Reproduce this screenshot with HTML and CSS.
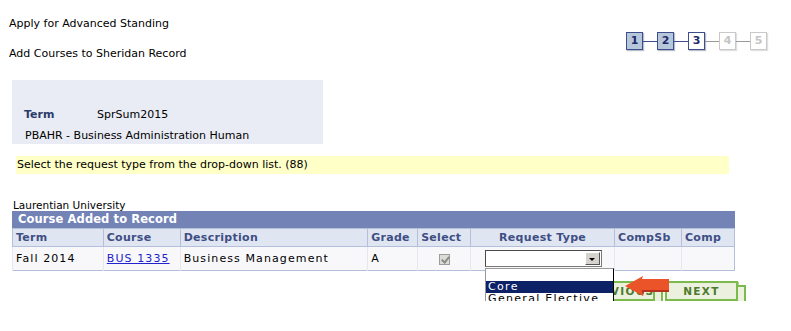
FILE: index.html
```html
<!DOCTYPE html>
<html lang="en">
<head>
<meta charset="UTF-8" />
<title>Apply for Advanced Standing</title>
<link rel="stylesheet" href="styles.css">
</head>
<body>
  <div class="page-head">
    <div class="titles">
      <div class="title">Apply for Advanced Standing</div>
      <div class="subtitle">Add Courses to Sheridan Record</div>
    </div>
    <div class="steps" aria-label="Step 3 of 5">
      <span class="step done">1</span><span class="link"></span>
      <span class="step done">2</span><span class="link"></span>
      <span class="step current">3</span><span class="link off"></span>
      <span class="step off">4</span><span class="link off"></span>
      <span class="step off">5</span>
    </div>
  </div>

  <div class="term-box">
    <div class="term-row">
      <span class="term-label">Term</span>
      <span class="term-value">SprSum2015</span>
    </div>
    <div class="program">PBAHR - Business Administration Human</div>
  </div>

  <div class="message">Select the request type from the drop-down list. (88)</div>

  <div class="institution">Laurentian University</div>
  <table class="grid">
    <caption>Course Added to Record</caption>
    <thead>
      <tr>
        <th class="c-term">Term</th>
        <th class="c-course">Course</th>
        <th class="c-desc">Description</th>
        <th class="c-grade">Grade</th>
        <th class="c-select">Select</th>
        <th class="c-type center">Request Type</th>
        <th class="c-compsb">CompSb</th>
        <th class="c-comp">Comp</th>
      </tr>
    </thead>
    <tbody>
      <tr>
        <td>Fall 2014</td>
        <td><a href="#">BUS 1335</a></td>
        <td>Business Management</td>
        <td>A</td>
        <td class="center"><span class="check"></span></td>
        <td class="type-cell">
          <div class="combo">
            <span class="combo-text"></span>
            <span class="combo-btn"></span>
          </div>
          <ul class="options">
            <li>&nbsp;</li>
            <li class="picked">Core</li>
            <li>General Elective</li>
          </ul>
        </td>
        <td></td>
        <td></td>
      </tr>
    </tbody>
  </table>

  <div class="actions">
    <button class="btn prev">PREVIOUS</button>
    <button class="btn next">NEXT</button>
    <svg class="pointer" viewBox="0 0 45 21" aria-hidden="true">
      <path d="M0 10 L18 0 L17 3 L44 3 L44 14 L17 14 L18 20 Z" fill="#ea5428" />
      <path d="M17 14 L44 14 L44 16 L19 16 L18 20 Z" fill="#b9331c" />
    </svg>
  </div>
</body>
</html>
```

FILE: styles.css
```css
* {
  box-sizing: border-box;
}

body {
  margin: 0;
  width: 791px;
  font-family: "DejaVu Sans", Verdana, sans-serif;
  font-size: 11px;
  color: #000;
  background: #fff;
}

/* Page title and step tracker */
.page-head {
  display: flex;
  justify-content: space-between;
  padding: 17px 24px 0 9px;
}

.title {
  height: 30px;
}

.subtitle {
  height: 33px;
}

.steps {
  display: flex;
  align-items: center;
  height: 18px;
  margin-top: 15px;
}

.step {
  width: 17px;
  height: 18px;
  border: 1px solid #3d4d8e;
  background: #b7c7db;
  color: #1c2a6a;
  font-weight: bold;
  font-size: 11px;
  line-height: 16px;
  text-align: center;
  box-shadow: 1px 1px 1px #b9bdc6;
}

.step.current {
  background: #fff;
}

.step.off {
  border-color: #c9c9c9;
  background: #fff;
  color: #c4c4c4;
  box-shadow: 1px 1px 1px #e0e0e0;
}

.link {
  width: 14px;
  height: 1px;
  background: #3d4d8e;
}

.link.off {
  background: #9a9a9a;
}

/* Term panel */
.term-box {
  width: 311px;
  height: 64px;
  margin: 0 0 0 12px;
  padding: 28px 0 0 12px;
  background: #e9ecf4;
}

.term-row {
  display: flex;
  height: 21px;
}

.term-label {
  width: 73px;
  font-weight: bold;
  color: #2b3a6c;
}

.program {
  padding-left: 1px;
}

.message {
  width: 713px;
  height: 18px;
  margin: 12px 0 0 16px;
  padding: 2px 0 0 1px;
  background: #ffffc8;
}

.institution {
  margin: 26px 0 0 13px;
  font-size: 10.5px;
  line-height: 11px;
}

/* Course grid */
.grid {
  width: 723px;
  margin-left: 12px;
  border-collapse: collapse;
  border: 1px solid #b4bfdb;
}

.grid caption {
  height: 17px;
  padding: 1px 0 0 6px;
  background: #7383b6;
  color: #fff;
  font-weight: bold;
  font-size: 11.5px;
  text-align: left;
  letter-spacing: 0.1px;
}

.grid th {
  height: 18px;
  padding: 0 3px;
  background: #dfe6f2;
  border: 1px solid #b4bfdb;
  border-top: none;
  color: #3f4e84;
  font-weight: bold;
  text-align: left;
  letter-spacing: 0.3px;
}

.grid td {
  height: 24px;
  padding: 0 3px;
  background: #f8f8fa;
  border-left: 1px solid #e4e7ee;
  letter-spacing: 1.1px;
}

.grid .center {
  text-align: center;
}

.c-term { width: 91px; }
.c-course { width: 77px; }
.c-desc { width: 188px; }
.c-grade { width: 50px; }
.c-select { width: 53px; }
.c-type { width: 144px; }
.c-compsb { width: 67px; }
.c-comp { width: 53px; }

.grid a {
  color: #2222cc;
}

.check {
  display: inline-block;
  width: 11px;
  height: 11px;
  border: 1px solid #9c9c9c;
  background: #dcdcd4;
  vertical-align: middle;
  position: relative;
}

.check::after {
  content: "";
  position: absolute;
  left: 3px;
  top: 0;
  width: 3px;
  height: 6px;
  border: solid #8a8a8a;
  border-width: 0 2px 2px 0;
  transform: rotate(40deg);
}

/* Request type drop-down */
.type-cell {
  position: relative;
  padding-left: 14px !important;
}

.combo {
  display: flex;
  width: 117px;
  height: 17px;
  border: 1px solid #7a7a7a;
  border-top-color: #4a4a4a;
  border-left-color: #4a4a4a;
  background: #fff;
}

.combo-text {
  flex: 1;
}

.combo-btn {
  width: 15px;
  margin: 1px;
  background: #d6d3ce;
  border: 1px solid #fff;
  border-right-color: #555;
  border-bottom-color: #555;
  position: relative;
}

.combo-btn::after {
  content: "";
  position: absolute;
  left: 3px;
  top: 5px;
  border: 3px solid transparent;
  border-top: 3px solid #000;
}

.options {
  position: absolute;
  left: 14px;
  top: 21px;
  width: 129px;
  margin: 0;
  padding: 0 0 1px;
  list-style: none;
  background: #fff;
  border: 1px solid #000;
  border-top-color: #999;
  border-left-color: #999;
  z-index: 2;
  letter-spacing: 1.3px;
}

.options li {
  height: 12px;
  line-height: 12px;
  padding-left: 2px;
  white-space: nowrap;
}

.options li:first-child {
  height: 12px;
}

.options .picked {
  background: #0c2166;
  color: #fff;
}

/* Bottom buttons */
.actions {
  position: relative;
  display: flex;
  justify-content: flex-end;
  gap: 10px;
  width: 738px;
  margin-top: 10px;
}

.btn {
  position: relative;
  width: 73px;
  height: 20px;
  padding: 0;
  border: 2px solid #7cba4c;
  background: #ebf1de;
  color: #4d7a2e;
  font-family: "DejaVu Sans", Verdana, sans-serif;
  font-size: 10.5px;
  font-weight: bold;
  letter-spacing: 1.3px;
  box-shadow: 1px 1px 0 #a9d38b;
}

.btn::after {
  content: "";
  position: absolute;
  right: -10px;
  top: 2px;
  width: 6px;
  height: 16px;
  border: 2px solid #7cba4c;
  border-left: none;
  background: #ebf1de;
}

.pointer {
  position: absolute;
  left: 625px;
  top: -5px;
  width: 45px;
  height: 21px;
  z-index: 3;
}
```
